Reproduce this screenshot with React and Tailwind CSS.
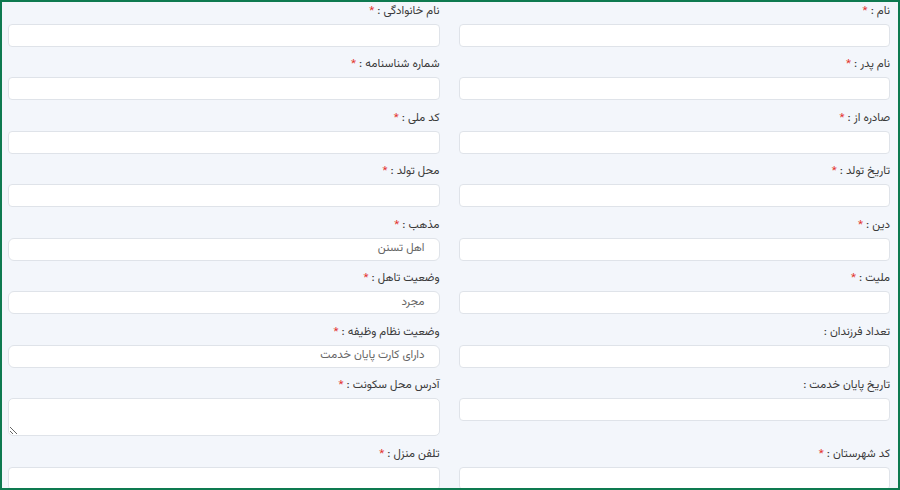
import React from "react";

const fields = [
  { label: "نام", required: true },
  { label: "نام خانوادگی", required: true },
  { label: "نام پدر", required: true },
  { label: "شماره شناسنامه", required: true },
  { label: "صادره از", required: true },
  { label: "کد ملی", required: true },
  { label: "تاریخ تولد", required: true },
  { label: "محل تولد", required: true },
  { label: "دین", required: true },
  { label: "مذهب", required: true, select: "اهل تسنن" },
  { label: "ملیت", required: true },
  { label: "وضعیت تاهل", required: true, select: "مجرد" },
  { label: "تعداد فرزندان", required: false },
  { label: "وضعیت نظام وظیفه", required: true, select: "دارای کارت پایان خدمت" },
  { label: "تاریخ پایان خدمت", required: false },
  { label: "آدرس محل سکونت", required: true, textarea: true },
  { label: "کد شهرستان", required: true },
  { label: "تلفن منزل", required: true },
];

function Field({ label, required, select, textarea }) {
  return (
    <div className="flex flex-col">
      <label className="h-[14px] mb-[6px] text-[11.5px] leading-[14px] text-[#3a3a3a] whitespace-nowrap">
        {label} : {required && <span className="text-[#e3342f]">*</span>}
      </label>
      {textarea ? (
        <textarea className="h-[38px] bg-white border border-[#dfe3e9] rounded-[5px] outline-none px-2 text-[12px]" />
      ) : select ? (
        <div className="h-[23px] bg-white border border-[#dfe3e9] rounded-[6px] flex items-center pr-[14px] text-[11.5px] text-[#666]">
          {select}
        </div>
      ) : (
        <input className="h-[23px] bg-white border border-[#dfe3e9] rounded-[4px] outline-none px-2 text-[12px]" />
      )}
    </div>
  );
}

export default function App() {
  return (
    <div
      dir="rtl"
      className="h-[490px] overflow-hidden border-2 border-[#0e7a50] bg-[#f3f6fb] pt-[1.5px] pr-[8px] pl-[6px]"
      style={{ fontFamily: '"Vazirmatn", "Noto Sans Arabic", "DejaVu Sans Condensed", "DejaVu Sans", sans-serif' }}
    >
      <div className="grid grid-cols-2 gap-x-[19px] gap-y-[10.5px]">
        {fields.map((f) => (
          <Field key={f.label} {...f} />
        ))}
      </div>
    </div>
  );
}
